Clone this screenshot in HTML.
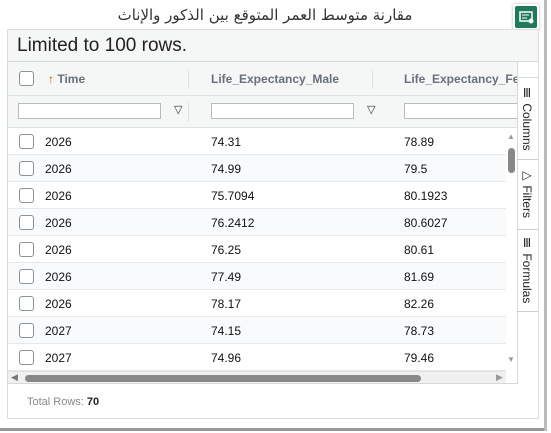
<!DOCTYPE html>
<html><head><meta charset="utf-8"><style>
*{box-sizing:border-box;margin:0;padding:0}
body{width:551px;height:433px;background:#fff;font-family:"Liberation Sans",Arial,sans-serif;position:relative;overflow:hidden}
.abs{position:absolute}
.title{left:0;width:530px;top:6px;text-align:center;font-family:"DejaVu Sans","Liberation Sans",sans-serif;font-size:15px;color:#333}
.panel{left:7px;top:29px;width:532px;height:390px;background:#f5f6f6;border:1px solid #ddd}
.grid{left:7px;top:61px;width:511px;height:323px;background:#fff;border:1px solid #d6d9dc;overflow:hidden}
.hdr{left:0;top:0;width:511px;height:34px;background:#f5f7f7;border-bottom:1px solid #dde2e2}
.flt{left:0;top:34px;width:511px;height:32px;background:#f5f7f7;border-bottom:1px solid #dde2e2}
.cb{width:15px;height:15px;border:1px solid #8a9199;border-radius:3px;background:#fff}
.ht{font-size:12px;color:#68707a;font-weight:bold}
.inp{height:16px;border:1px solid #b8bcc0;background:#fff}
.row{left:0;width:498px;height:27px;border-bottom:1px solid #e6e9eb;font-size:12px;color:#111}
.row span{position:absolute;top:7px}
.sep{width:1px;height:20px;background:#e1e4e6}
.side{writing-mode:vertical-rl;font-size:12px;color:#222}
</style></head><body>
<div class="abs title">مقارنة متوسط العمر المتوقع بين الذكور والإناث</div>
<div class="abs" style="left:513px;top:4px;width:26px;height:27px;background:#fff;box-shadow:0 0 3px #bbb"></div>
<div class="abs" style="left:515px;top:6px;width:22px;height:22px;background:#1e7a5a;border-radius:2px">
<svg width="22" height="22"><rect x="5" y="6" width="12" height="9" fill="none" stroke="#fff" stroke-width="1.5"/><line x1="7" y1="9" x2="14" y2="9" stroke="#fff"/><line x1="7" y1="12" x2="12" y2="12" stroke="#fff"/><circle cx="16" cy="15" r="2.5" fill="#fff"/></svg></div>
<div class="abs panel"></div>
<div class="abs" style="left:17px;top:35px;font-size:19px;color:#222">Limited to 100 rows.</div>
<div class="abs grid">
 <div class="abs hdr">
  <div class="abs cb" style="left:11px;top:9px"></div>
  <div class="abs ht" style="left:40px;top:10px"><span style="color:#b35a00">↑</span> Time</div>
  <div class="abs sep" style="left:180px;top:7px"></div>
  <div class="abs ht" style="left:203px;top:10px">Life_Expectancy_Male</div>
  <div class="abs sep" style="left:364px;top:7px"></div>
  <div class="abs ht" style="left:396px;top:10px;white-space:nowrap">Life_Expectancy_Fer</div>
 </div>
 <div class="abs flt">
  <div class="abs inp" style="left:10px;top:7px;width:143px"></div>
  <div class="abs" style="left:166px;top:7px;font-size:11px;color:#333">▽</div>
  <div class="abs sep" style="left:180px;top:6px"></div>
  <div class="abs inp" style="left:203px;top:7px;width:143px"></div>
  <div class="abs" style="left:359px;top:7px;font-size:11px;color:#333">▽</div>
  <div class="abs inp" style="left:396px;top:7px;width:120px"></div>
 </div>
 <div class="abs" style="left:0;top:66px">
  <div class="abs row" style="top:0"><div class="abs cb" style="left:11px;top:6px"></div><span style="left:37px">2026</span><span style="left:203px">74.31</span><span style="left:396px">78.89</span></div>
  <div class="abs row" style="top:27px;background:#f8fafc"><div class="abs cb" style="left:11px;top:6px"></div><span style="left:37px">2026</span><span style="left:203px">74.99</span><span style="left:396px">79.5</span></div>
  <div class="abs row" style="top:54px"><div class="abs cb" style="left:11px;top:6px"></div><span style="left:37px">2026</span><span style="left:203px">75.7094</span><span style="left:396px">80.1923</span></div>
  <div class="abs row" style="top:81px;background:#f8fafc"><div class="abs cb" style="left:11px;top:6px"></div><span style="left:37px">2026</span><span style="left:203px">76.2412</span><span style="left:396px">80.6027</span></div>
  <div class="abs row" style="top:108px"><div class="abs cb" style="left:11px;top:6px"></div><span style="left:37px">2026</span><span style="left:203px">76.25</span><span style="left:396px">80.61</span></div>
  <div class="abs row" style="top:135px;background:#f8fafc"><div class="abs cb" style="left:11px;top:6px"></div><span style="left:37px">2026</span><span style="left:203px">77.49</span><span style="left:396px">81.69</span></div>
  <div class="abs row" style="top:162px"><div class="abs cb" style="left:11px;top:6px"></div><span style="left:37px">2026</span><span style="left:203px">78.17</span><span style="left:396px">82.26</span></div>
  <div class="abs row" style="top:189px;background:#f8fafc"><div class="abs cb" style="left:11px;top:6px"></div><span style="left:37px">2027</span><span style="left:203px">74.15</span><span style="left:396px">78.73</span></div>
  <div class="abs row" style="top:216px"><div class="abs cb" style="left:11px;top:6px"></div><span style="left:37px">2027</span><span style="left:203px">74.96</span><span style="left:396px">79.46</span></div>
 </div>
 <div class="abs" style="left:498px;top:66px;width:12px;height:243px;background:#fff"></div>
 <div class="abs" style="left:499px;top:70px;font-size:8px;color:#999">▲</div>
 <div class="abs" style="left:500px;top:86px;width:7px;height:25px;background:#888;border-radius:4px"></div>
 <div class="abs" style="left:499px;top:293px;font-size:8px;color:#999">▼</div>
 <div class="abs" style="left:0;top:309px;width:498px;height:14px;background:#f0f0f0;border-top:1px solid #e0e0e0"></div>
 <div class="abs" style="left:3px;top:310px;font-size:9px;color:#777">◀</div>
 <div class="abs" style="left:17px;top:313px;width:396px;height:7px;background:#888;border-radius:4px"></div>
 <div class="abs" style="left:488px;top:310px;font-size:9px;color:#999">▶</div>
</div>
<div class="abs" style="left:517px;top:61px;width:21px;height:323px;background:#fff;border-left:1px solid #d6d9dc;border-top:1px solid #d6d9dc"></div>
<div class="abs" style="left:517px;top:77px;width:21px;height:83px;border-bottom:1px solid #ccc;border-top:1px solid #ddd"></div>
<div class="abs" style="left:517px;top:160px;width:21px;height:70px;border-bottom:1px solid #ccc"></div>
<div class="abs" style="left:517px;top:230px;width:21px;height:82px;border-bottom:1px solid #ccc"></div>
<div class="abs side" style="left:520px;top:86px">Ⅲ Columns</div>
<div class="abs side" style="left:520px;top:168px">▷ Filters</div>
<div class="abs side" style="left:520px;top:236px">Ⅲ Formulas</div>
<div class="abs" style="left:7px;top:384px;width:532px;height:35px;background:#fff;border:1px solid #ddd;border-top:none"></div>
<div class="abs" style="left:27px;top:396px;font-size:11px;color:#888">Total Rows: <b style="color:#222">70</b></div>
<div class="abs" style="left:0;top:428px;width:546px;height:3px;background:#999"></div>
<div class="abs" style="left:544px;top:0;width:3px;height:431px;background:#bbb"></div>
</body></html>
